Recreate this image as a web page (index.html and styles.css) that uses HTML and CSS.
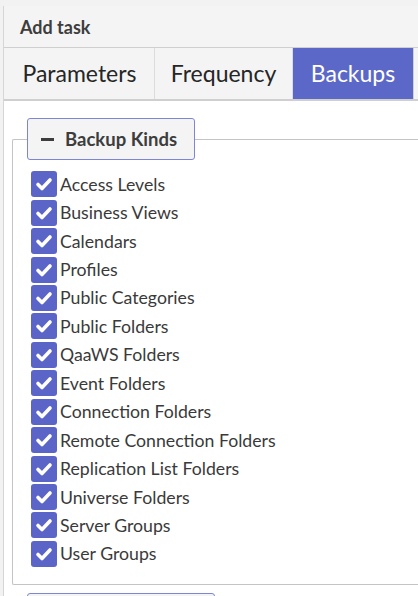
FILE: index.html
```html
<!DOCTYPE html>
<html>
<head>
<meta charset="utf-8">
<link rel="stylesheet" href="styles.css">
</head>
<body>
<div class="backdrop">
  <div class="dialog">
    <div class="header">Add task</div>
    <div class="tabs">
      <div class="tab">Parameters</div>
      <div class="tab">Frequency</div>
      <div class="tab active">Backups</div>
    </div>
    <div class="content">
      <fieldset class="kinds">
        <legend class="legend"><span class="minus"></span>Backup Kinds</legend>
        <ul class="list">
          <li class="item"><span class="cb"><svg viewBox="0 0 26 26"><path d="M7 13.5l4 4 8-8.5" /></svg></span>Access Levels</li>
          <li class="item"><span class="cb"><svg viewBox="0 0 26 26"><path d="M7 13.5l4 4 8-8.5" /></svg></span>Business Views</li>
          <li class="item"><span class="cb"><svg viewBox="0 0 26 26"><path d="M7 13.5l4 4 8-8.5" /></svg></span>Calendars</li>
          <li class="item"><span class="cb"><svg viewBox="0 0 26 26"><path d="M7 13.5l4 4 8-8.5" /></svg></span>Profiles</li>
          <li class="item"><span class="cb"><svg viewBox="0 0 26 26"><path d="M7 13.5l4 4 8-8.5" /></svg></span>Public Categories</li>
          <li class="item"><span class="cb"><svg viewBox="0 0 26 26"><path d="M7 13.5l4 4 8-8.5" /></svg></span>Public Folders</li>
          <li class="item"><span class="cb"><svg viewBox="0 0 26 26"><path d="M7 13.5l4 4 8-8.5" /></svg></span>QaaWS Folders</li>
          <li class="item"><span class="cb"><svg viewBox="0 0 26 26"><path d="M7 13.5l4 4 8-8.5" /></svg></span>Event Folders</li>
          <li class="item"><span class="cb"><svg viewBox="0 0 26 26"><path d="M7 13.5l4 4 8-8.5" /></svg></span>Connection Folders</li>
          <li class="item"><span class="cb"><svg viewBox="0 0 26 26"><path d="M7 13.5l4 4 8-8.5" /></svg></span>Remote Connection Folders</li>
          <li class="item"><span class="cb"><svg viewBox="0 0 26 26"><path d="M7 13.5l4 4 8-8.5" /></svg></span>Replication List Folders</li>
          <li class="item"><span class="cb"><svg viewBox="0 0 26 26"><path d="M7 13.5l4 4 8-8.5" /></svg></span>Universe Folders</li>
          <li class="item"><span class="cb"><svg viewBox="0 0 26 26"><path d="M7 13.5l4 4 8-8.5" /></svg></span>Server Groups</li>
          <li class="item"><span class="cb"><svg viewBox="0 0 26 26"><path d="M7 13.5l4 4 8-8.5" /></svg></span>User Groups</li>
        </ul>
      </fieldset>
      <div class="next-btn"></div>
    </div>
  </div>
</div>
</body>
</html>
```

FILE: styles.css
```css
html, body {
  margin: 0;
  padding: 0;
  width: 418px;
  height: 596px;
  overflow: hidden;
  background: #f2f2f2;
  font-family: "Lato", "Liberation Sans", sans-serif;
  color: #333;
}
.backdrop {
  padding: 6px 0 0 3px;
  height: 596px;
  box-sizing: border-box;
}
.dialog {
  background: #fff;
  border-left: 1px solid #d6d6d6;
  height: 100%;
  box-sizing: border-box;
}
.header {
  height: 41px;
  background: #f4f4f4;
  border-bottom: 1px solid #cfcfcf;
  font-weight: bold;
  font-size: 18px;
  line-height: 43px;
  padding-left: 16px;
  color: #3d3d3d;
}
.tabs {
  display: flex;
  height: 51px;
  border-bottom: 2px solid #cfcfcf;
  background: #f4f4f4;
  padding-left: 1px;
}
.tab {
  font-size: 23px;
  line-height: 51px;
  color: #262626;
  border-right: 1px solid #dcdcdc;
  text-align: center;
}
.tab:nth-child(1) { width: 149px; }
.tab:nth-child(2) { width: 137px; }
.tab.active {
  width: 120px;
  background: #5c68c8;
  color: #fff;
  border-right: 1px solid #d0d0d0;
}
.content {
  padding: 17px 0 0 8px;
}
.kinds {
  margin: 0;
  border: 1px solid #c4c4c4;
  border-right: none;
  border-radius: 2px 0 0 2px;
  padding: 10px 0 16px 18px;
}
.legend {
  margin-left: -4px;
  padding: 0 11px 0 13px;
  height: 42px;
  border: 1px solid #7d86d4;
  border-radius: 3px;
  background: #f4f4f4;
  font-weight: bold;
  font-size: 18.5px;
  color: #3d3d3d;
  display: flex;
  align-items: center;
  box-sizing: border-box;
  width: 168px;
}
.minus {
  display: inline-block;
  width: 13px;
  height: 3px;
  background: #3d3d3d;
  margin-right: 11px;
}
.list {
  list-style: none;
  margin: 0;
  padding: 0;
}
.item {
  display: flex;
  align-items: center;
  height: 28.45px;
  font-size: 17.7px;
  color: #3a3a3a;
}
.cb {
  width: 26px;
  height: 26px;
  border-radius: 3px;
  background: #5b64c7;
  margin-right: 3px;
  flex: none;
  display: flex;
}
.cb svg {
  width: 26px;
  height: 26px;
  fill: none;
  stroke: #fff;
  stroke-width: 3.6;
  stroke-linecap: round;
  stroke-linejoin: round;
}
.next-btn {
  margin: 8px 0 0 15px;
  width: 186px;
  height: 20px;
  border: 1px solid #7d86d4;
  border-radius: 3px;
  background: #f4f4f4;
}
```
